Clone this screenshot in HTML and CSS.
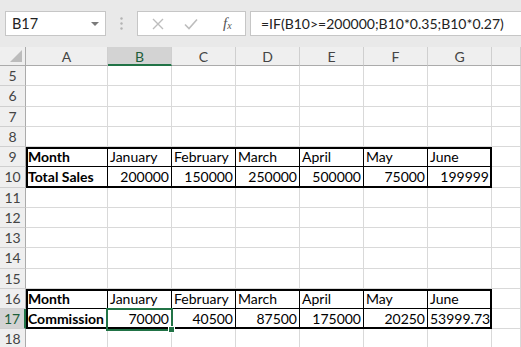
FILE: index.html
```html
<!DOCTYPE html>
<html lang="en">
<head>
    <meta charset="UTF-8">
    <title>Commission - Sheet1</title>
    <link rel="stylesheet" href="styles.css">
</head>
<body>
    <div class="toolbar">
        <div class="namebox">
            <span>B17</span>
            <svg class="drop" width="8" height="4" viewBox="0 0 8 4"><polygon points="0,0 8,0 4,4" fill="#7a7a7a"/></svg>
        </div>
        <div class="grip">
            <svg width="3" height="13" viewBox="0 0 3 13"><circle cx="1.5" cy="1.5" r="1.2" fill="#b3b3b3"/><circle cx="1.5" cy="6.5" r="1.2" fill="#b3b3b3"/><circle cx="1.5" cy="11.5" r="1.2" fill="#b3b3b3"/></svg>
        </div>
        <div class="fx-buttons">
            <svg width="12" height="12" viewBox="0 0 12 12"><path d="M1 1 L11 11 M11 1 L1 11" stroke="#bdbdbd" stroke-width="1.4"/></svg>
            <svg width="14" height="12" viewBox="0 0 14 12"><path d="M1 6.5 L5 10.5 L13 1.5" stroke="#bdbdbd" stroke-width="1.6" fill="none"/></svg>
            <span class="fx">f<sub>x</sub></span>
        </div>
        <div class="formula">=IF(B10&gt;=200000;B10*0.35;B10*0.27)</div>
    </div>

    <div class="sheet" id="sheet">
        <div class="corner">
            <svg width="12" height="12" viewBox="0 0 12 12"><polygon points="12,0 12,12 0,12" fill="#bcbcbc"/></svg>
        </div>
    </div>

    <script>
        const sheet = document.getElementById('sheet');
        const columns = ['A', 'B', 'C', 'D', 'E', 'F', 'G', ''];
        const months = ['Month', 'January', 'February', 'March', 'April', 'May', 'June'];
        const data = {
            9: months,
            10: ['Total Sales', 200000, 150000, 250000, 500000, 75000, 199999],
            16: months,
            17: ['Commission', 70000, 40500, 87500, 175000, 20250, 53999.73]
        };

        // track 1 is the header row, sheet row 5 is track 2
        function place(el, track, col) {
            el.style.gridRow = track;
            el.style.gridColumn = col;
        }

        columns.forEach((name, i) => {
            const cell = document.createElement('div');
            cell.className = 'col-head' + (name === 'B' ? ' active' : '');
            cell.textContent = name;
            place(cell, 1, i + 2);
            sheet.appendChild(cell);
        });

        for (let row = 5; row <= 18; row++) {
            const track = row - 3;
            const head = document.createElement('div');
            head.className = 'row-head' + (row === 17 ? ' active' : '');
            head.textContent = row;
            place(head, track, 1);
            sheet.appendChild(head);

            const values = data[row] || [];
            for (let c = 0; c < columns.length; c++) {
                const cell = document.createElement('div');
                cell.className = 'cell';
                if (values.length && c < 7) {
                    cell.classList.add('boxed');
                    const v = values[c];
                    if (typeof v === 'number') cell.classList.add('num');
                    if (c === 0) cell.classList.add('label');
                    cell.textContent = v;
                }
                place(cell, track, c + 2);
                sheet.appendChild(cell);
            }
        }

        ['frame frame-sales', 'frame frame-commission', 'selection'].forEach(cls => {
            const el = document.createElement('div');
            el.className = cls;
            sheet.appendChild(el);
        });
    </script>
</body>
</html>
```

FILE: styles.css
```css
body {
    margin: 0;
    background-color: #e9e9e9;
    font-family: Lato, 'Liberation Sans', sans-serif;
    color: #000;
    overflow: hidden;
}
.toolbar {
    display: flex;
    align-items: stretch;
    height: 25px;
    padding: 11px 0 11px 5px;
}
.namebox {
    width: 101px;
    box-sizing: border-box;
    background-color: #fff;
    border: 1px solid #c6c6c6;
    display: flex;
    align-items: center;
    justify-content: space-between;
    padding: 0 6px 0 6px;
    font-size: 14.5px;
    color: #222;
}
.namebox .drop {
    margin-top: 1px;
}
.grip {
    width: 31px;
    display: flex;
    align-items: center;
    justify-content: center;
}
.fx-buttons {
    width: 109px;
    box-sizing: border-box;
    background-color: #fff;
    border: 1px solid #c6c6c6;
    display: flex;
    align-items: center;
    padding-left: 14px;
    gap: 20px;
}
.fx {
    font-family: 'Liberation Serif', serif;
    font-style: italic;
    font-size: 15px;
    color: #555;
    margin-left: 5px;
}
.fx sub {
    font-size: 10px;
    vertical-align: -1px;
}
.formula {
    flex: 1;
    margin-left: 4px;
    background-color: #fff;
    border: 1px solid #c6c6c6;
    border-right: none;
    font-size: 14px;
    color: #222;
    padding-left: 10px;
    line-height: 23px;
    white-space: nowrap;
}
.sheet {
    display: grid;
    grid-template-columns: 26px 82px repeat(6, 64px) 1fr;
    grid-template-rows: 19px repeat(14, 20.25px);
    background-color: #fff;
    font-size: 14px;
}
.corner {
    grid-row: 1;
    grid-column: 1;
    background-color: #efefef;
    border-right: 1px solid #ababab;
    border-bottom: 1px solid #ababab;
    display: flex;
    align-items: flex-end;
    justify-content: flex-end;
    padding: 0 3px 3px 0;
}
.col-head {
    background-color: #efefef;
    border-right: 1px solid #cfcfcf;
    border-bottom: 1px solid #ababab;
    text-align: center;
    line-height: 19px;
    color: #444;
}
.col-head.active {
    background-color: #d3d3d3;
    border-bottom: 2px solid #217346;
    color: #1e5e3a;
}
.row-head {
    background-color: #efefef;
    border-right: 1px solid #ababab;
    border-bottom: 1px solid #cfcfcf;
    text-align: center;
    line-height: 20px;
    color: #444;
}
.row-head.active {
    background-color: #d3d3d3;
    border-right: 2px solid #217346;
    color: #1e5e3a;
}
.cell {
    border-right: 1px solid #d9d9d9;
    border-bottom: 1px solid #d9d9d9;
    line-height: 20px;
    padding: 0 2px;
    white-space: nowrap;
    overflow: hidden;
}
.cell.boxed {
    border-color: #000;
}
.cell.num {
    text-align: right;
}
.cell.label {
    font-weight: bold;
}
.frame {
    grid-column: 2 / 9;
    border: 2px solid #000;
    pointer-events: none;
}
.frame-sales {
    grid-row: 6 / 8;
}
.frame-commission {
    grid-row: 13 / 15;
}
.selection {
    grid-column: 3 / 4;
    grid-row: 14 / 15;
    margin: -1px -1px -2px -2px;
    border: 2px solid #217346;
    position: relative;
}
.selection::after {
    content: '';
    position: absolute;
    right: -4px;
    bottom: -4px;
    width: 5px;
    height: 5px;
    background-color: #217346;
    border: 1px solid #fff;
}
```
